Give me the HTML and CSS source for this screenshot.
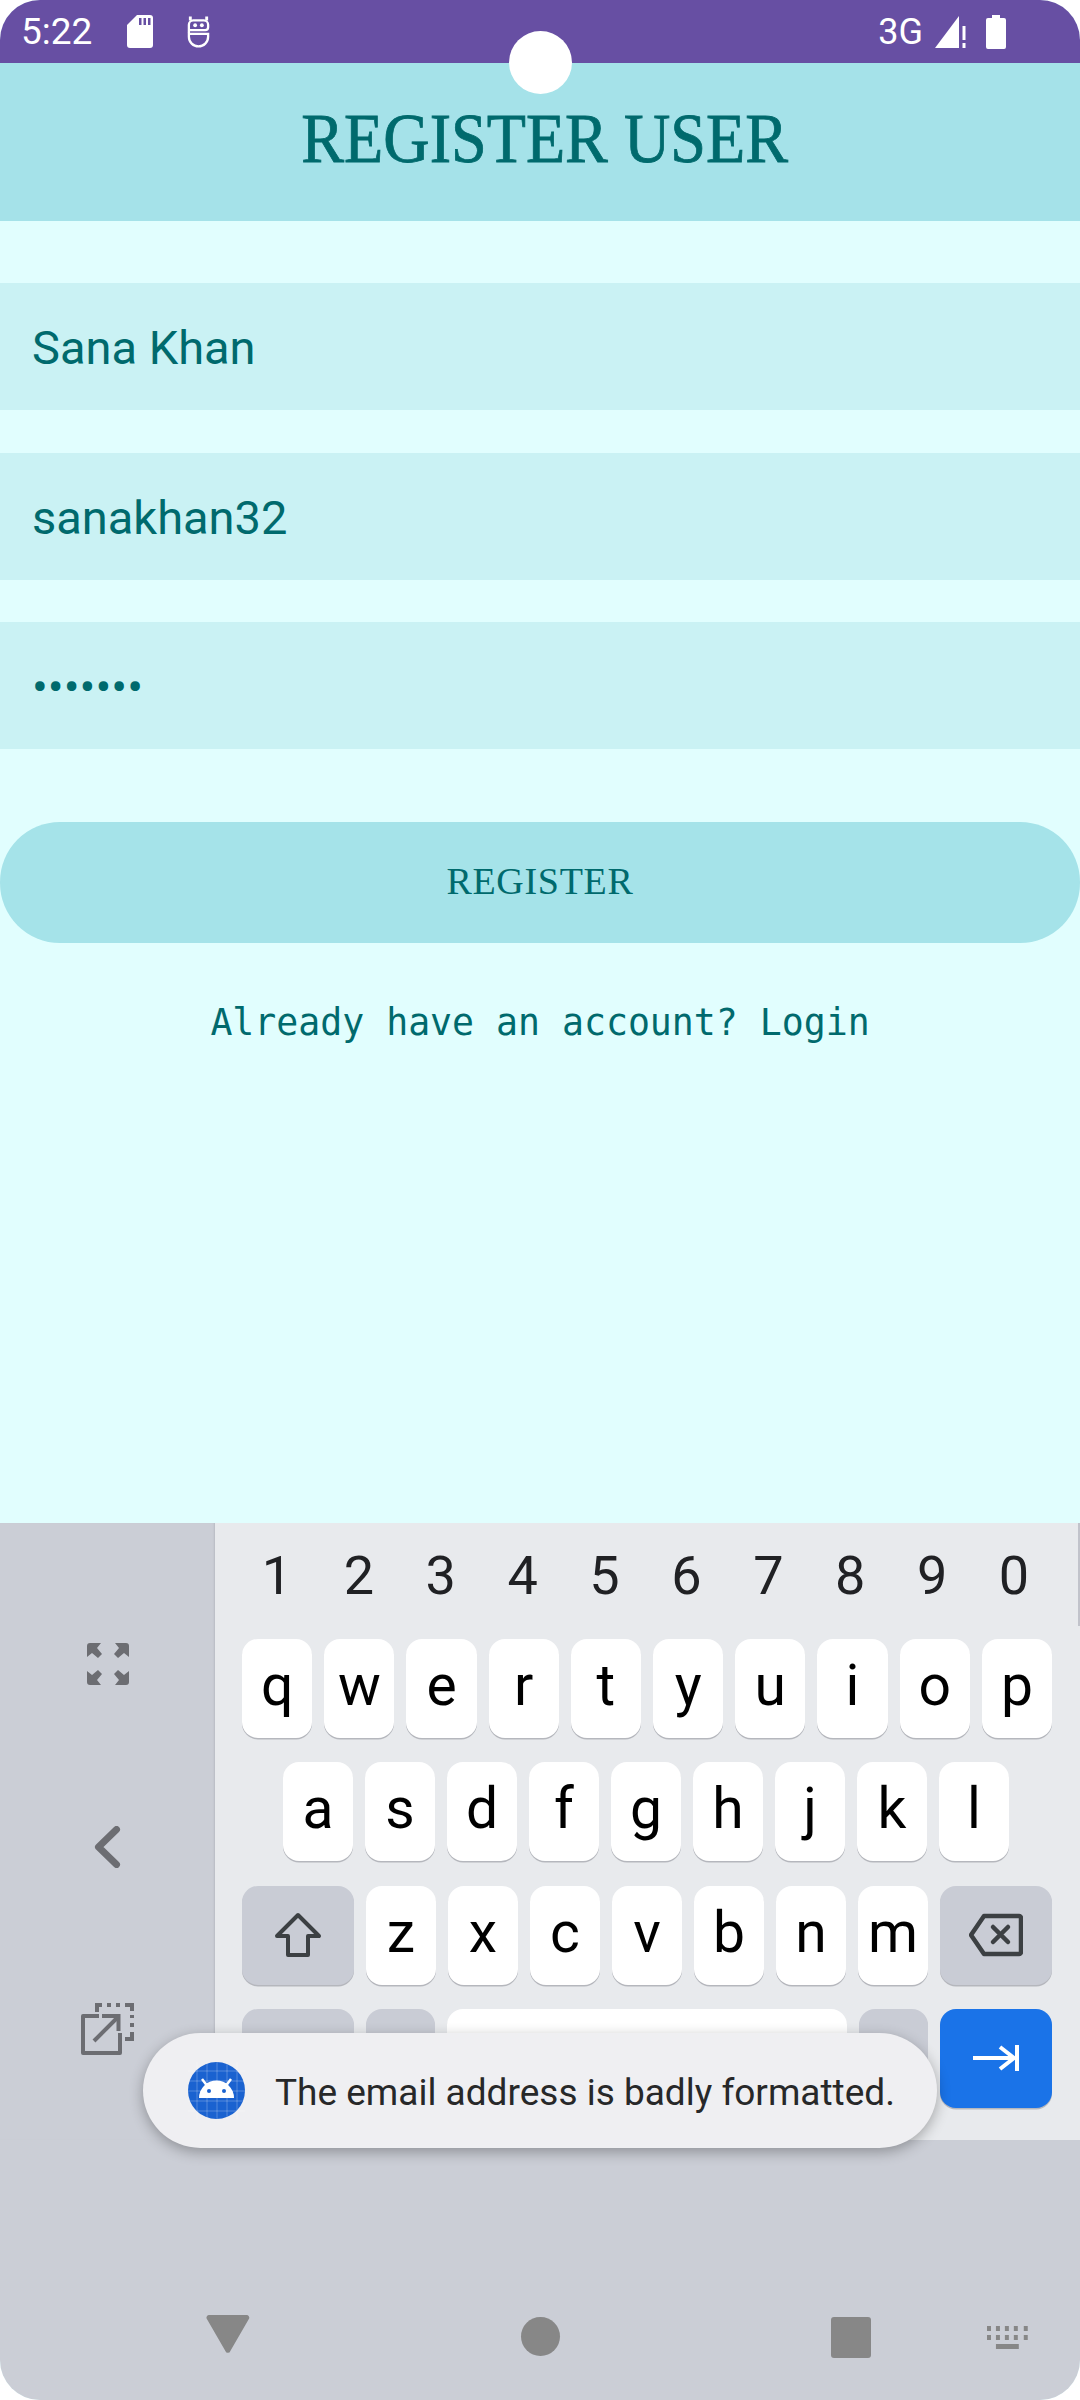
FILE: index.html
```html
<!DOCTYPE html>
<html lang="en">
<head>
  <meta charset="UTF-8" />
  <meta name="viewport" content="width=device-width, initial-scale=1" />
  <title>Register User</title>
  <link rel="stylesheet" href="styles.css">
</head>
<body>
  <div class="phone">
    <div class="camera"></div>

    <div class="status-bar">
      <div class="status-left">
        <span class="clock">5:22</span>
        <svg class="icon-sd" viewBox="0 0 26 33"><path fill="#fff" d="M10 0h13a3 3 0 0 1 3 3v27a3 3 0 0 1-3 3H3a3 3 0 0 1-3-3V10z"/><path fill="#674fa3" d="M12 3h2.500v7H12zM16.500 3H19v7h-2.500zM21 3h2.500v7H21z"/></svg>
        <svg class="icon-bot" viewBox="0 0 26 33"><g fill="none" stroke="#fff" stroke-width="2.400"><path d="M3 18V9.500A4.500 4.500 0 0 1 7.500 5h11A4.500 4.500 0 0 1 23 9.500V12a3 3 0 0 1-3 3H3"/><path d="M3 19h20v3a10 10 0 0 1-20 0z"/></g><path fill="#fff" d="M3 1h3v4H3zM20 1h3v4h-3z"/><circle cx="9.500" cy="10" r="2" fill="#fff"/><circle cx="16.500" cy="10" r="2" fill="#fff"/></svg>
      </div>
      <div class="status-right">
        <span class="net">3G</span>
        <svg class="icon-signal" viewBox="0 0 32 33"><path fill="#fff" d="M0 33 24 1v32z"/><path fill="#fff" d="M27.500 11h3v14h-3zM27.500 28h3v5h-3z"/></svg>
        <svg class="icon-battery" viewBox="0 0 20 34"><path fill="#fff" d="M6 0h8v3h4a2 2 0 0 1 2 2v27a2 2 0 0 1-2 2H2a2 2 0 0 1-2-2V5a2 2 0 0 1 2-2h4z"/></svg>
      </div>
    </div>

    <div class="title-bar"><h1>REGISTER USER</h1></div>

    <div class="form">
      <div class="field">Sana Khan</div>
      <div class="field">sanakhan32</div>
      <div class="field field-pass">•••••••</div>
      <button class="register-btn" type="button">REGISTER</button>
      <p class="login-link">Already have an account? Login</p>
    </div>

    <div class="ime">
      <div class="ime-main">
        <div class="side-panel">
          <svg class="side-icon" viewBox="0 0 42 42"><path fill="#6c6d72" d="M0 3a3 3 0 0 1 3-3h11l-4 5 5 6-4 4-6-5-5 4zM42 3a3 3 0 0 0-3-3H28l4 5-5 6 4 4 6-5 5 4zM0 39a3 3 0 0 0 3 3h11l-4-5 5-6-4-4-6 5-5-4zM42 39a3 3 0 0 1-3 3H28l4-5-5-6 4-4 6 5 5-4z"/></svg>
          <svg class="side-icon side-icon-back" viewBox="0 0 42 42"><path fill="none" stroke="#6c6d72" stroke-width="7" stroke-linecap="round" stroke-linejoin="round" d="M29.500 3.500 11.500 21l18 17.500"/></svg>
          <svg class="side-icon-popout" viewBox="0 0 53 52"><g fill="none" stroke="#6c6d72" stroke-width="4"><path stroke-linejoin="round" d="M18 13H2v37h37V30"/><path d="M13 38 36 15"/><path d="M21 13h16.500v15"/><path d="M16 9V2h5M26 2h4M35 2h4M44 2h7v6M51 12v3M51 20v4M51 29v7h-7"/></g></svg>
        </div>

        <div class="keyboard">
          <div class="digits">
            <span>1</span><span>2</span><span>3</span><span>4</span><span>5</span><span>6</span><span>7</span><span>8</span><span>9</span><span>0</span>
          </div>
          <div class="key-row">
            <span class="key">q</span><span class="key">w</span><span class="key">e</span><span class="key">r</span><span class="key">t</span><span class="key">y</span><span class="key">u</span><span class="key">i</span><span class="key">o</span><span class="key">p</span>
          </div>
          <div class="key-row key-row-mid">
            <span class="key">a</span><span class="key">s</span><span class="key">d</span><span class="key">f</span><span class="key">g</span><span class="key">h</span><span class="key">j</span><span class="key">k</span><span class="key">l</span>
          </div>
          <div class="key-row">
            <span class="key key-fn key-wide">
              <svg class="key-icon" viewBox="0 0 48 46"><path fill="none" stroke="#3c4043" stroke-width="4" stroke-linejoin="round" d="M24 3 45 24H34v19H14V24H3z"/></svg>
            </span>
            <span class="key">z</span><span class="key">x</span><span class="key">c</span><span class="key">v</span><span class="key">b</span><span class="key">n</span><span class="key">m</span>
            <span class="key key-fn key-wide">
              <svg class="key-icon key-icon-back" viewBox="0 0 54 44"><g fill="none" stroke="#3c4043" stroke-width="4.500" stroke-linejoin="round"><path d="M15 3h35a2 2 0 0 1 2 2v34a2 2 0 0 1-2 2H15L2 22z"/><path stroke-linecap="round" d="m24 14 15 15M39 14 24 29"/></g></svg>
            </span>
          </div>
          <div class="key-row">
            <span class="key key-fn key-wide"></span>
            <span class="key key-fn"></span>
            <span class="key key-space"></span>
            <span class="key key-fn"></span>
            <span class="key key-enter key-wide">
              <svg class="key-icon key-icon-tab" viewBox="0 0 46 26"><path fill="none" stroke="#fff" stroke-width="4" d="M0 13h41M27 2l14 11-14 11M44 0v26"/></svg>
            </span>
          </div>
        </div>
      </div>

      <div class="nav-bar">
        <svg class="nav-back" viewBox="0 0 44 38"><path fill="#878787" d="M3 0h38a2.500 2.500 0 0 1 2.400 3.300L24.500 36a2.600 2.600 0 0 1-5 0L.600 3.300A2.500 2.500 0 0 1 3 0z"/></svg>
        <span class="nav-home"></span>
        <span class="nav-recent"></span>
        <svg class="nav-keys" viewBox="0 0 41 23"><path fill="#878787" d="M0 0h4v5H0zM9 0h4v5H9zM18 0h4v5h-4zM27 0h4v5h-4zM37 0h4v5h-4zM0 9h4v5H0zM9 9h4v5H9zM18 9h4v5h-4zM27 9h4v5h-4zM37 9h4v5h-4zM9 18h23v5H9z"/></svg>
      </div>
    </div>

    <div class="toast">
      <svg class="toast-icon" viewBox="0 0 57 57">
        <circle cx="28.500" cy="28.500" r="28.500" fill="#1a62d0"/>
        <path stroke="#fff" stroke-opacity=".25" stroke-width="1" d="M0 9h57M0 19h57M0 29h57M0 39h57M0 49h57M9 0v57M19 0v57M29 0v57M39 0v57M49 0v57"/>
        <path fill="#fff" d="M11 36a17.500 17.500 0 0 1 35 0z"/>
        <path stroke="#fff" stroke-width="2.500" d="m14 17 6 8M43 17l-6 8"/>
        <circle cx="21" cy="29" r="2" fill="#1a62d0"/><circle cx="36" cy="29" r="2" fill="#1a62d0"/>
      </svg>
      <span class="toast-text">The email address is badly formatted.</span>
    </div>
  </div>
</body>
</html>
```

FILE: styles.css
```css
* {
  box-sizing: border-box;
}
html, body {
  margin: 0;
  background: #fff;
}
.phone {
  position: relative;
  width: 1080px;
  height: 2400px;
  display: flex;
  flex-direction: column;
  overflow: hidden;
  border-radius: 40px;
  background: #e1fefe;
  font-family: Roboto, sans-serif;
}
.camera {
  position: absolute;
  left: 509px;
  top: 31px;
  width: 63px;
  height: 63px;
  border-radius: 50%;
  background: #fff;
}

/* status bar */
.status-bar {
  height: 63px;
  flex: none;
  display: flex;
  justify-content: space-between;
  align-items: center;
  padding: 0 74px 0 21px;
  background: #674fa3;
  color: #fff;
}
.status-left, .status-right {
  display: flex;
  align-items: center;
}
.clock {
  width: 106px;
  font-size: 37px;
}
.icon-sd {
  width: 26px;
  height: 33px;
  margin-right: 33px;
}
.icon-bot {
  width: 25px;
  height: 33px;
}
.net {
  font-size: 36px;
  margin-right: 12px;
}
.icon-signal {
  width: 32px;
  height: 33px;
  margin-right: 19px;
}
.icon-battery {
  width: 20px;
  height: 34px;
}

.title-bar {
  height: 158px;
  flex: none;
  display: flex;
  justify-content: center;
  align-items: center;
  padding: 0 0 5px 10px;
  background: #a5e2e9;
}
.title-bar h1 {
  margin: 0;
  font-family: "Liberation Serif", serif;
  font-size: 69px;
  font-weight: 400;
  color: #006a6d;
  -webkit-text-stroke: 0.8px #006a6d;
  transform: scaleX(0.93);
}

/* form */
.form {
  flex: 1;
  display: flex;
  flex-direction: column;
  padding-top: 62px;
}
.field {
  height: 127px;
  flex: none;
  display: flex;
  align-items: center;
  margin-bottom: 42.500px;
  padding: 2px 0 0 32px;
  background: #caf2f4;
  font-size: 47px;
  color: #006a6d;
}
.field-pass {
  margin-bottom: 73px;
}
.register-btn {
  height: 121px;
  flex: none;
  padding-bottom: 4px;
  border: none;
  border-radius: 60px;
  background: #a5e3e9;
  font-family: "Liberation Serif", serif;
  font-size: 38px;
  letter-spacing: 0.7px;
  color: #006a6d;
}
.login-link {
  margin: 58px 0 0;
  text-align: center;
  font-family: "DejaVu Sans Mono", monospace;
  font-size: 36.500px;
  color: #006a6d;
}

/* keyboard */
.ime {
  height: 877px;
  flex: none;
  display: flex;
  flex-direction: column;
  background: #cbced6;
}
.ime-main {
  height: 617px;
  flex: none;
  display: flex;
  background: linear-gradient(#c1c3cb 103px, #e8eaed 103px);
}
.side-panel {
  width: 215px;
  flex: none;
  display: flex;
  flex-direction: column;
  align-items: center;
  padding-top: 120px;
  background: #cbced6;
  box-shadow: inset -2px 0 2px -1px #b9bcc4;
}
.side-icon {
  width: 42px;
  height: 42px;
  margin-bottom: 141px;
}
.side-icon-back {
  margin-bottom: 135px;
}
.side-icon-popout {
  width: 53px;
  height: 52px;
}
.keyboard {
  width: 863px;
  flex: none;
  padding: 0 26px 0 27px;
  border-radius: 0 0 4px 0;
  background: #e8eaed;
}
.digits {
  height: 116px;
  display: grid;
  grid-template-columns: repeat(10, 1fr);
  align-items: center;
  gap: 12px;
  padding: 0 3px 12px 0;
  text-align: center;
  font-size: 54px;
  color: #202124;
}
.key-row {
  display: flex;
  gap: 12px;
  margin-bottom: 24.300px;
}
.key-row-mid {
  padding: 0 41px;
}
.key {
  flex: 1;
  height: 99px;
  display: flex;
  justify-content: center;
  align-items: center;
  padding-bottom: 6px;
  border-radius: 16px;
  background: #fff;
  box-shadow: 0 1.500px 0 #b5b7bd;
  font-size: 57px;
  color: #000;
}
.key-row-mid .key {
  flex: none;
  width: 70px;
}
.key-wide {
  flex: none;
  width: 112px;
  padding-bottom: 0;
}
.key-fn {
  background: #c9ccd5;
}
.key-space {
  flex: none;
  width: 400px;
}
.key-enter {
  background: #1a73e8;
}
.key-icon {
  width: 48px;
  height: 46px;
}
.key-icon-back {
  width: 54px;
  height: 44px;
}
.key-icon-tab {
  width: 46px;
  height: 26px;
}

/* nav */
.nav-bar {
  flex: 1;
  display: flex;
  align-items: flex-start;
  padding: 175px 52px 0 206px;
}
.nav-back {
  width: 44px;
  height: 38px;
  margin-right: 271px;
}
.nav-home {
  width: 39px;
  height: 39px;
  margin: 2px 271px 0 0;
  border-radius: 50%;
  background: #878787;
}
.nav-recent {
  width: 41px;
  height: 41px;
  margin: 2px 116px 0 0;
  border-radius: 3px;
  background: #878787;
}
.nav-keys {
  width: 41px;
  height: 23px;
  margin-top: 11px;
}

/* toast */
.toast {
  position: absolute;
  left: 143px;
  top: 2033px;
  width: 794px;
  height: 115px;
  display: flex;
  align-items: center;
  padding-left: 45px;
  border-radius: 58px;
  background: #efeff2;
  box-shadow: 0 4px 14px rgba(0, 0, 0, 0.3);
}
.toast-icon {
  width: 57px;
  height: 57px;
  margin-right: 30px;
}
.toast-text {
  padding-top: 3px;
  font-size: 37px;
  color: #272829;
}
```
